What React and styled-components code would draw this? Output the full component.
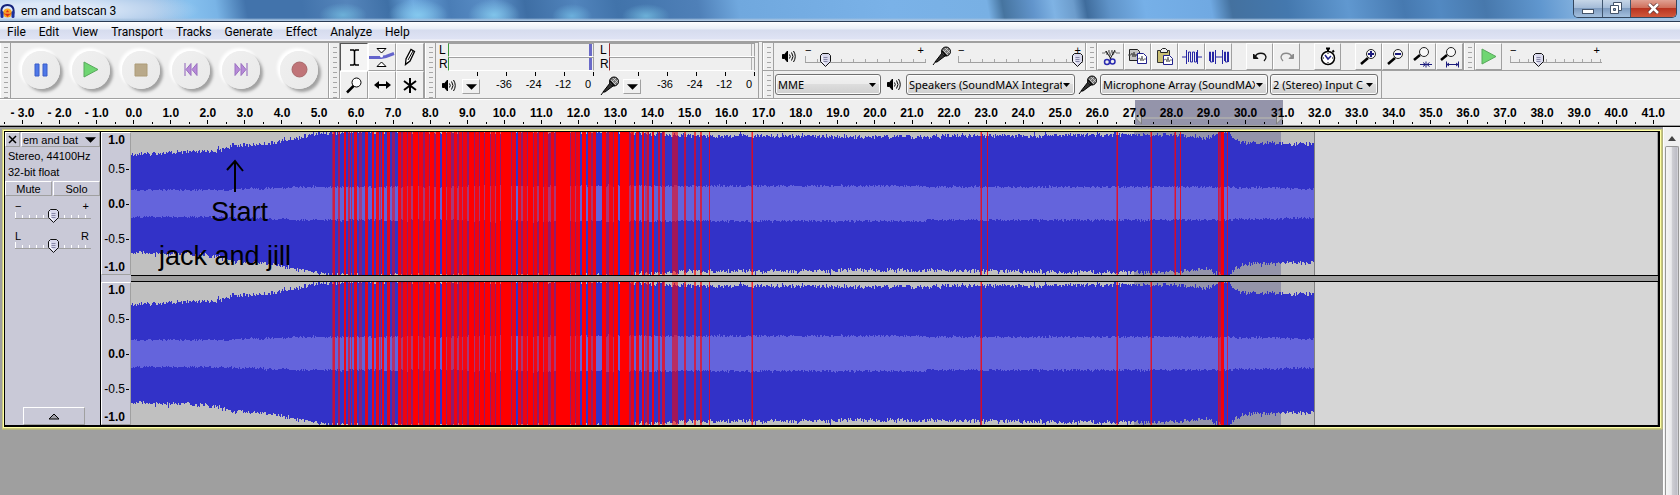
import React from 'react'
import styled, { createGlobalStyle, css } from 'styled-components'

const GlobalStyle = createGlobalStyle`
  * {
    box-sizing: border-box;
  }
  body {
    margin: 0;
    background: #9f9f9f;
    font-family: "Liberation Sans", Arial, sans-serif;
    font-size: 11px;
    color: #000;
  }
  button, select, input {
    font-family: inherit;
    font-size: inherit;
    color: inherit;
    margin: 0;
  }
`

const Window = styled.div`
  min-height: 100vh;
  display: flex;
  flex-direction: column;
  overflow: hidden;
`

/* ---------- title bar and menu ---------- */

const TitleBar = styled.header`
  height: 22px;
  display: flex;
  align-items: flex-start;
  justify-content: space-between;
  border-bottom: 1px solid #2a3c55;
  padding-right: 3px;
  background:
    linear-gradient(180deg, rgba(255, 255, 255, 0) 18px, #a9c4e0 20px),
    radial-gradient(ellipse 150px 22px at 50px 10px, rgba(228, 237, 250, 0.9) 30%, rgba(200, 218, 242, 0) 100%),
    radial-gradient(ellipse 24px 12px at 343px 15px, #6cb0d8, transparent),
    radial-gradient(ellipse 30px 16px at 418px 15px, #84c8ee, transparent),
    radial-gradient(ellipse 26px 16px at 494px 15px, #80c4ea, transparent),
    radial-gradient(ellipse 20px 12px at 572px 16px, #6cb0dc, transparent),
    radial-gradient(ellipse 24px 12px at 646px 16px, #6cb0d8, transparent),
    linear-gradient(80deg, #9dbfe4 0, #9dbfe4 150px, #86c0ee 190px, #79b4e6 215px, #4273ab 245px,
      #4273ab 300px, #5585bb 345px, #3f70a6 385px, #6ba5dc 410px, #4a7db6 445px, #5c90c8 490px, #3e6ea4 520px,
      #5184bc 570px, #4173aa 610px, #4f80b8 690px, #70a8de 730px, #7ab2e8 880px, #78b0e4 975px,
      #46749f 990px, #6295cc 1020px, #7fb3e4 1040px, #6c9ccc 1060px, #3f6c9c 1072px, #5f93c8 1095px,
      #76b0e8 1130px, #70a9e2 1195px, #44719f 1215px, #4478ae 1270px, #6098d0 1330px, #4679b0 1385px,
      #5289c2 1420px, #4778ac 1465px, #6097cf 1520px, #8fbae4 1570px, #a5c8ea 1680px);
`
const Title = styled.h1`
  display: flex;
  align-items: center;
  gap: 6px;
  margin: 0;
  height: 22px;
  font: 12px Roboto, "Open Sans", sans-serif;
`
const WindowButtons = styled.div`
  display: flex;
  height: 18px;
  border: 1px solid #33465e;
  border-top: 0;
  border-radius: 0 0 5px 5px;
  overflow: hidden;
`
const WindowButton = styled.button`
  width: ${props => (props.$close ? 46 : 28)}px;
  padding: 0;
  border: 0;
  border-left: ${props => (props.$first ? '0' : '1px solid #40566f')};
  display: flex;
  align-items: center;
  justify-content: center;
  background: ${props => (props.$close
    ? 'linear-gradient(#e0a193 0, #d0705c 45%, #b93420 50%, #d0583c 100%)'
    : 'linear-gradient(#c6d6e8 0, #a5bcd8 45%, #7f9cc0 50%, #a4c0de 100%)')};
`
const MenuBar = styled.nav`
  height: 20px;
  display: flex;
  align-items: center;
  gap: 13px;
  padding-left: 7px;
  border-bottom: 1px solid #a0a0a0;
  background: linear-gradient(#fff 0, #e9eef7 7px, #d6dcee 8px, #dfe3f4 17px, #f4f4f8 18px);
`
const MenuItem = styled.button`
  padding: 0;
  border: 0;
  background: none;
  font: 12px/18px Roboto, "Open Sans", sans-serif;
`

/* ---------- toolbars ---------- */

const Dock = styled.div`
  height: 57px;
  display: flex;
  background: #efefef;
  border-bottom: 1px solid #a0a0a0;
`
const Rows = styled.div`
  flex: 1;
  display: flex;
  flex-direction: column;
  margin-left: 3px;
  border-left: 1px solid #a0a0a0;
`
const Row = styled.div`
  height: 28px;
  display: flex;
  align-items: stretch;
  border-top: 1px solid #a0a0a0;
`
const Bar = styled.section`
  display: flex;
  border-top: ${props => (props.$tall ? '1px solid #a0a0a0' : '0')};
  border-right: 1px solid #a0a0a0;
`
const Grip = styled.div`
  width: 11px;
  flex: none;
  border-right: 1px solid #a0a0a0;
  box-shadow: inset 1px 0 #fff;
  background: repeating-linear-gradient(#efefef 0, #efefef 4px, #a6a6a6 4px, #a6a6a6 5px) 4px 0 / 4px 100% no-repeat;
`
const TransportButtons = styled.div`
  display: flex;
  align-items: center;
  gap: 12px;
  padding: 0 10px 2px 11px;
`
const RoundButton = styled.button`
  width: 38px;
  height: 38px;
  padding: 0;
  border: 0;
  border-radius: 50%;
  margin-left: ${props => (props.$apart ? 8 : 0)}px;
  display: flex;
  align-items: center;
  justify-content: center;
  background: linear-gradient(135deg, #f0f0f0, #e9e9e9);
  box-shadow: 3px 3px 3px #a2a2a2, -2px -2px 3px 1px #fff, 0 0 0 2px #f3f3f3;
`
const ToolGrid = styled.div`
  display: grid;
  grid-template-columns: repeat(3, 28px);
  grid-template-rows: repeat(2, 28px);
`
const bevel = css`
  border: 1px solid;
  border-color: #fff #a0a0a0 #a0a0a0 #fff;
`
const ToolButton = styled.button`
  ${bevel}
  padding: 0;
  width: ${props => props.$width || 28}px;
  display: flex;
  align-items: center;
  justify-content: center;
  background: #efefef;
  ${props => props.$pressed && css`
    border-color: #555 #fff #fff #555;
    background: #f4f4f4;
  `}
`
const Gap = styled.div`
  width: 14px;
`
const MeterHalf = styled.div`
  display: grid;
  grid-template-columns: 9px 146px;
  grid-template-rows: 14px 14px 5px 19px;
  padding: 0 3px;
`
const MeterName = styled.span`
  font-size: 12px;
  line-height: 14px;
`
const MeterTrack = styled.div`
  border: 1px solid #a0a0a0;
  border-left-color: ${props => props.$color};
  border-bottom-color: #fff;
  background: ${props => (props.$peak
    ? 'linear-gradient(#6a6ac8, #6a6ac8) right 1px top 0 / 3px 100% no-repeat'
    : 'linear-gradient(#b0b0b0, #b0b0b0) right 2px top 0 / 1px 100% no-repeat')};
`
const MeterTicks = styled.div`
  grid-column: 2;
  background: repeating-linear-gradient(90deg, #000 0, #000 1px, transparent 1px, transparent 29px) 29px 1px / 117px 4px no-repeat;
`
const MeterFoot = styled.div`
  grid-column: 1 / 3;
  display: flex;
  align-items: center;
`
const MeterMenu = styled.button`
  ${bevel}
  width: 18px;
  height: 15px;
  padding: 0;
  margin: 2px 0 0 3px;
  background: #efefef;
  display: flex;
  align-items: center;
  justify-content: center;
`
const MeterScale = styled.div`
  flex: 1;
  display: flex;
  justify-content: space-between;
  padding: 0 3px 3px 16px;
`
const IconBox = styled.span`
  width: ${props => props.$width}px;
  flex: none;
  display: flex;
  align-items: center;
  justify-content: center;
`

const thumb = css`
  width: 11px;
  height: 14px;
  border: 0;
  background: url("data:image/svg+xml,%3Csvg xmlns='http://www.w3.org/2000/svg' width='11' height='14'%3E%3Cpath d='M2.5.5h6l2 2v6l-5 5-5-5v-6z' fill='%23d8d8ec' stroke='%23111'/%3E%3Cpath d='M2 3v5l3.500 3.500' fill='none' stroke='%23fff'/%3E%3Cpath d='M3.500 4.500h4M3.500 6.500h4M3.500 8.500h4' stroke='%238888a8'/%3E%3C/svg%3E");
`
const SliderBox = styled.label`
  width: ${props => props.$width}px;
  display: flex;
  flex-direction: column;
  flex: none;
`
const SliderEnds = styled.span`
  display: flex;
  justify-content: space-between;
  height: 12px;
  padding-right: 2px;
  line-height: 14px;
`
const Range = styled.input`
  appearance: none;
  width: 100%;
  height: 14px;
  margin-top: -2px;
  background:
    linear-gradient(#a0a0a0, #a0a0a0) 0 9px / 100% 1px no-repeat,
    linear-gradient(${props => props.$tick}, ${props => props.$tick}) 0 3px / 1px 6px no-repeat,
    repeating-linear-gradient(90deg, ${props => props.$tick} 0, ${props => props.$tick} 1px, transparent 1px, transparent ${props => props.$step}px) 0 6px / 100% 3px no-repeat;
  &::-webkit-slider-thumb {
    appearance: none;
    ${thumb}
  }
`
const SliderPanel = styled.div`
  display: flex;
  align-items: flex-start;
  padding: 0 2px 0 8px;
  & > ${IconBox} {
    height: 26px;
  }
`
const DeviceBar = styled.div`
  display: flex;
  align-items: center;
  padding: 0 3px 0 1px;
  gap: 2px;
`
const DeviceSelect = styled.select`
  appearance: none;
  width: ${props => props.$width}px;
  height: 21px;
  padding: 0 12px 0 2px;
  border: 1px solid #707070;
  border-radius: 3px;
  box-shadow: inset 0 0 0 1px #fcfcfc;
  font: 11px "Noto Sans", "Open Sans", sans-serif;
  background:
    url("data:image/svg+xml,%3Csvg xmlns='http://www.w3.org/2000/svg' width='7' height='4'%3E%3Cpath d='M0 0h7L3.500 4z'/%3E%3C/svg%3E") right 4px center no-repeat,
    linear-gradient(#f2f2f2 0, #ebebeb 50%, #dddddd 50%, #cfcfcf 100%);
`

/* ---------- time ruler ---------- */

const Ruler = styled.div`
  position: relative;
  height: 28px;
  display: flex;
  padding: 0 8px 1px 4px;
  border-top: 1px solid #fff;
  border-bottom: 1px solid #000;
  background: linear-gradient(#efefef 25px, #a0a0a0 25px);
`
const RulerSelection = styled.div`
  position: absolute;
  top: 0;
  bottom: 1px;
  display: flex;
  align-items: flex-end;
  justify-content: space-between;
  background: linear-gradient(#9494aa 17px, #a8a8ac 17px, #a8a8ac 19px, #9494aa 19px);
`
const Second = styled.div`
  position: relative;
  flex: 1 1 0;
  display: flex;
  justify-content: center;
  margin-bottom: 1px;
  font-weight: bold;
  font-size: 12px;
  line-height: 27px;
  white-space: nowrap;
  background:
    linear-gradient(#000, #000) 50% 100% / 1px 4px no-repeat,
    linear-gradient(#000, #000) 0 100% / 1px 2px no-repeat;
`

/* ---------- track ---------- */

const Workspace = styled.main`
  flex: 1;
  display: flex;
  background: #9f9f9f;
`
const TrackList = styled.div`
  flex: 1;
  min-width: 0;
  padding: 2px 1px 0 2px;
`
const TrackFrame = styled.div`
  border: 1px solid #c8c87c;
  padding: 1px;
  background: #ffffa8;
  box-shadow: 0 1px #b4b480, 1px 0 #b4b480;
`
const Track = styled.div`
  display: flex;
  border: 1px solid #000;
  border-right-width: 2px;
  border-bottom-width: 2px;
  background: #c9c9d7;
`
const TrackPanel = styled.aside`
  width: 96px;
  flex: none;
  display: flex;
  flex-direction: column;
  border-right: 1px solid #000;
`
const PanelRow = styled.div`
  display: flex;
  gap: 1px;
`
const PanelButton = styled.button`
  border: 1px solid;
  border-color: #fff #a0a0a0 #a0a0a0 #fff;
  flex: ${props => (props.$width ? 'none' : '1')};
  width: ${props => (props.$width ? props.$width + 'px' : 'auto')};
  height: ${props => props.$height || 15}px;
  padding: 0 ${props => (props.$split ? '3px 0 1px' : 0)};
  display: flex;
  align-items: center;
  justify-content: ${props => (props.$split ? 'space-between' : 'center')};
  background: #c9c9d7;
`
const TrackInfo = styled.p`
  margin: 0;
  padding: 1px 3px;
  line-height: 16px;
`
const PanelSliders = styled.div`
  flex: 1;
  display: flex;
  flex-direction: column;
  gap: 6px;
  padding: 3px 0 0 10px;
`
const CollapseRow = styled.div`
  display: flex;
  justify-content: center;
  padding-left: 3px;
`
const Channels = styled.div`
  position: relative;
  flex: 1;
  min-width: 0;
  display: flex;
  flex-direction: column;
  gap: 7px;
  background: linear-gradient(#000, #000) 30px 143px / 100% 1px no-repeat,
    linear-gradient(#000, #000) 30px 149px / 100% 1px no-repeat,
    linear-gradient(#9f9f9f, #9f9f9f) 30px 143px / 100% 7px no-repeat #c9c9d7;
`
const Channel = styled.div`
  display: flex;
  height: 143px;
`
const AmpRuler = styled.div`
  width: 30px;
  flex: none;
  display: grid;
  grid-template-rows: 29px 35px 35px 28px 14px;
  border: 1px solid #fff;
  border-right-color: #a0a0a0;
  border-bottom-color: #a0a0a0;
  font-size: 12px;
  line-height: 14px;
  text-align: right;
`
const Amp = styled.span`
  height: 14px;
  padding-right: 5px;
  font-weight: ${props => (props.$bold ? 'bold' : 'normal')};
  background: ${props => (props.$tick ? 'linear-gradient(#000, #000) right 1px top 7px / 3px 1px no-repeat' : 'none')};
`
const Wave = styled.svg`
  flex: 1;
  min-width: 0;
  height: 143px;
  display: block;
  background: #d6d6d6;
`
const Note = styled.div`
  position: absolute;
  top: 26px;
  left: 58px;
  width: 132px;
  display: flex;
  flex-direction: column;
  align-items: center;
  font-size: 27px;
  line-height: 44px;
  white-space: nowrap;
`
const NoteTitle = styled.span`
  padding-left: 29px;
  display: flex;
  flex-direction: column;
  align-items: center;
`
const NoteArrow = styled.svg`
  margin: 1px 10px -3px 0;
`
const ScrollBar = styled.div`
  width: 17px;
  flex: none;
  display: flex;
  flex-direction: column;
  border-left: 1px solid #fff;
  background: #f0f0f0;
`
const ScrollArrow = styled.button`
  height: 19px;
  padding: 0;
  border: 0;
  background: #f0f0f0;
`
const ScrollThumb = styled.div`
  flex: 1;
  margin: 0 1px;
  border: 1px solid #979797;
  border-bottom: 0;
  border-radius: 2px 2px 0 0;
  background: linear-gradient(90deg, #f6f6f6 0, #e9e9ec 45%, #cfcfd4 50%, #bdbdc6 90%, #e0e0e4 100%);
`

/* ---------- icons ---------- */

const Logo = () => (
  <svg width="15" height="15" viewBox="0 0 15 15">
    <path d="M2 11C0 4 3 1 7.500 1S15 4 13 11" fill="none" stroke="#14227c" strokeWidth="2" />
    <circle cx="7.500" cy="9" r="4.500" fill="#f9a51a" />
    <path d="M4 10l2-2 1.500-2L9 8l2 2-2 1-1.500 2L6 11z" fill="#e02b14" />
    <path d="M5 9h5" stroke="#ffe84a" />
    <rect x="0.500" y="7" width="3" height="7" rx="1.500" fill="#1b2f9c" />
    <rect x="11.500" y="7" width="3" height="7" rx="1.500" fill="#1b2f9c" />
  </svg>
)

const Speaker = () => (
  <svg width="14" height="13" viewBox="0 0 14 13" fill="none" stroke="#000">
    <path d="M0.500 4.500h2l3-3.500v11l-3-3.500h-2z" fill="#000" />
    <path d="M7.500 4.500q1.500 2 0 4M9.500 2.500q3 4 0 8M11.500 1q3.500 5.500 0 11" />
  </svg>
)

const Mic = () => (
  <svg width="20" height="20" viewBox="0 0 20 20">
    <path d="M1 19l3-4" stroke="#000" />
    <path d="M3 16l7-9 3 3-8 6z" fill="#333" stroke="#000" />
    <circle cx="14" cy="5.500" r="4.500" fill="#777" stroke="#000" />
    <path d="M11 4l5 5M13 2l5 5M11 7l5-5M13 9l5-5" stroke="#ddd" strokeWidth="0.700" />
    <path d="M10 5l4.500 5" stroke="#000" strokeWidth="1.500" />
  </svg>
)

const Down = ({ width = 11 }) => (
  <svg width={width} height="6" viewBox="0 0 12 6"><path d="M0 0h12L6 6z" /></svg>
)

const Magnifier = ({ children }) => (
  <svg width="22" height="20" viewBox="0 0 22 20">
    <path d="M3 17l7-6" stroke="#000" strokeWidth="2.500" />
    <circle cx="13" cy="7" r="4.500" fill="#f8f8f8" stroke="#222" />
    {children}
  </svg>
)

const ZoomIn = () => (
  <Magnifier><path d="M10 7h6M13 4v6" stroke="#1a1a7c" strokeWidth="2" /></Magnifier>
)
const ZoomOut = () => (
  <Magnifier><path d="M10 7h6" stroke="#1a1a7c" strokeWidth="2" /></Magnifier>
)
const FitSelection = () => (
  <svg width="22" height="22" viewBox="0 0 22 22">
    <path d="M2 14l6-5" stroke="#000" strokeWidth="2.500" />
    <circle cx="12" cy="6" r="4.500" fill="#f8f8f8" stroke="#222" />
    <path d="M8 18.500h12M14 15.500v6M11 16.500l2.500 2-2.500 2M17.500 16.500l-2.500 2 2.500 2" stroke="#1a1a7c" fill="none" />
  </svg>
)
const FitProject = () => (
  <svg width="22" height="22" viewBox="0 0 22 22">
    <path d="M2 14l6-5" stroke="#000" strokeWidth="2.500" />
    <circle cx="12" cy="6" r="4.500" fill="#f8f8f8" stroke="#222" />
    <path d="M7 18.500h12M7.500 15.500v6M19.500 15.500v6M10 17l-2 1.500 2 1.500M17 17l2 1.500-2 1.500" stroke="#1a1a7c" fill="none" />
  </svg>
)

const Pause = () => (
  <svg width="14" height="14">
    <path d="M1 1h4v12H1zM9 1h4v12H9z" fill="#4e78e8" stroke="#3a5cc8" />
  </svg>
)
const Play = () => (
  <svg width="16" height="17">
    <path d="M1 1l14 7.500L1 16z" fill="#6fd672" stroke="#58a85c" />
  </svg>
)
const Stop = () => (
  <svg width="14" height="14"><path d="M1 1h12v12H1z" fill="#b9a98a" stroke="#ad9c78" /></svg>
)
const SkipStart = () => (
  <svg width="14" height="15">
    <path d="M1 1v13" stroke="#8c5fb8" />
    <path d="M7 1.500v12L2 7.500zM13 1.500v12L8 7.500z" fill="#b78ad8" stroke="#9a70c0" />
  </svg>
)
const SkipEnd = () => (
  <svg width="14" height="15">
    <path d="M13 1v13" stroke="#8c5fb8" />
    <path d="M1 1.500v12l5-6zM7 1.500v12l5-6z" fill="#b78ad8" stroke="#9a70c0" />
  </svg>
)
const Record = () => (
  <svg width="17" height="17"><circle cx="8.500" cy="8.500" r="7.500" fill="#c07478" stroke="#a8686a" /></svg>
)

const IBeam = () => (
  <svg width="9" height="17" fill="none" stroke="#000">
    <path d="M0 1h3.500L4.500 2l1-1H9M0 16h3.500l1-1 1 1H9" strokeWidth="1.500" />
    <path d="M4.500 1.500v14" strokeWidth="1.500" />
  </svg>
)
const Envelope = () => (
  <svg width="26" height="22">
    <path d="M0 11.500h12l5-1 8-3" fill="none" stroke="#6464cc" strokeWidth="3" />
    <path d="M8 2.500h9L12.500 7zM8 20.500h9L12.500 16z" fill="#fff" stroke="#000" />
    <circle cx="12.500" cy="10" r="1.500" fill="#fff" />
  </svg>
)
const Pencil = () => (
  <svg width="12" height="18" fill="#fff" stroke="#000">
    <path d="M1.500 16.500L2 11l5-9.500 3.500 2L6 13z" strokeWidth="1.300" />
    <path d="M4 12L9 3M1.500 16.500l2-2" />
  </svg>
)
const ZoomTool = () => (
  <svg width="16" height="17">
    <path d="M1 15.500l7-7" stroke="#000" strokeWidth="2.500" />
    <circle cx="10.500" cy="5.500" r="4.500" fill="#fff" stroke="#000" />
  </svg>
)
const TimeShift = () => (
  <svg width="17" height="10">
    <path d="M0 5l5-4v3h7V1l5 4-5 4V6H5v3z" />
  </svg>
)
const MultiTool = () => (
  <svg width="14" height="15" stroke="#000" strokeWidth="2">
    <path d="M7 0v15M1 3l12 9M13 3L1 12" />
  </svg>
)
const Cut = () => (
  <svg width="20" height="18" fill="none">
    <path d="M1 5h3l1-2 1 4 2-5 1 6 2-6 1 5 2-4 1 2h4" stroke="#777" />
    <path d="M5 3l5 8M14 2L9 11" stroke="#111" />
    <circle cx="6" cy="14" r="2.500" stroke="#2a2ab0" strokeWidth="1.500" />
    <circle cx="11.500" cy="13.500" r="2.500" stroke="#2a2ab0" strokeWidth="1.500" />
  </svg>
)
const Copy = () => (
  <svg width="20" height="18" fill="none">
    <path d="M1.500 1.500h8l2 2v9h-10z" fill="#c4c4c4" stroke="#222" />
    <path d="M0 7h3l1-2 1 4 1-5 1 5 1-3 1 2h2" stroke="#555" />
    <path d="M9.500 5.500h6l3 3v7h-9z" fill="#fff" stroke="#20208c" />
    <path d="M10 11l2-1 1 3 1-5 1 5 1-2h2" stroke="#777" />
  </svg>
)
const Paste = () => (
  <svg width="20" height="19" fill="none">
    <path d="M2.500 3.500h12v12h-12z" fill="#c9bf74" stroke="#333" />
    <path d="M5.500 5.500v-2l2-2h3l2 2v2z" fill="#eee" stroke="#222" />
    <path d="M8.500 8.500h6l3 3v6h-9z" fill="#fff" stroke="#20208c" />
    <path d="M9 13l2-1 1 3 1-5 1 5 1-2h2" stroke="#777" />
  </svg>
)
const Trim = () => (
  <svg width="20" height="16" fill="none" stroke="#2626a4">
    <path d="M0 8h5M15 8h5M4.500 1v14M15.500 1v14" />
    <path d="M6.500 13V3h2v10h2V3h2v10h2V3" />
  </svg>
)
const Silence = () => (
  <svg width="20" height="16" fill="none" stroke="#2626a4">
    <path d="M0.500 12V3h1v10h2V3h1v10M15.500 12V3h1v10h2V3h1v10M7 8h6" />
    <path d="M6.500 1v14M13.500 1v14" />
  </svg>
)
const Undo = () => (
  <svg width="14" height="12" fill="none" stroke="#111">
    <path d="M2 6c2-5 10-5 11 0q0 2-2 4" strokeWidth="1.300" />
    <path d="M0.500 3v4.500H5z" fill="#111" />
  </svg>
)
const Redo = () => (
  <svg width="14" height="12" fill="none" stroke="#8a8a8a">
    <path d="M12 6C10 1 2 1 1 6q0 2 2 4" strokeWidth="1.300" />
    <path d="M13.500 3v4.500H9z" fill="#8a8a8a" />
  </svg>
)
const SyncLock = () => (
  <svg width="16" height="19" fill="none" stroke="#000">
    <path d="M6 1.500h4M8 1v3M12.500 3.500l1.500 1.500" strokeWidth="2" />
    <circle cx="8" cy="11" r="6.500" fill="#fff" strokeWidth="1.500" />
    <path d="M5 8l3 4 3-3" stroke="#20208c" strokeWidth="1.500" />
    <path d="M8 6v1M8 15v1M3 11h1M12 11h1" />
  </svg>
)

/* ---------- data ---------- */

const MENUS = ['File', 'Edit', 'View', 'Transport', 'Tracks', 'Generate', 'Effect', 'Analyze', 'Help']
const SECONDS = Array.from({ length: 45 }, (_, i) => i - 3)

// [x, distance of the peak from the edge of the channel]
const PEAKS = [[0, 22], [45, 21], [70, 20], [90, 18], [102, 13], [120, 13], [140, 11], [155, 8], [170, 5], [182, 2],
  [200, 1], [220, 0], [480, 0], [520, 2], [570, 4], [640, 4], [760, 5], [860, 4], [960, 3], [1040, 3], [1064, 4], [1074, 7],
  [1084, 2], [1090, 0], [1098, 0], [1104, 7], [1110, 11], [1184, 12]]
const RMS = [[0, 13], [80, 13], [120, 14], [170, 16], [500, 17], [1090, 16], [1115, 15], [1184, 14]]

// [start, end, opacity] of the clipped stretches
const CLIPS = [
  [201, 202, 0.4], [202, 204, 0.7], [207, 209, 0.6], [213, 215, 0.9], [217, 219, 0.6], [220, 221, 0.6],
  [223, 226, 0.85], [228, 231, 0.4], [234, 237, 0.85], [241, 243, 0.9], [245, 248, 0.85], [249, 250, 0.5],
  [251, 253, 0.9], [256, 259, 0.85], [261, 264, 0.5], [267, 309, 0.45], [311, 385, 0.45], [387, 449, 0.45],
  [451, 455, 0.6], [457, 465, 0.45], [471, 487, 0.45], [489, 500, 0.45],
  [267, 270, 0.85], [272, 276, 0.85], [277, 280, 0.85], [282, 287, 1], [288, 292, 0.85], [294, 298, 0.85],
  [299, 303, 1], [305, 309, 1], [311, 315, 1], [316, 320, 0.85], [323, 326, 0.85], [328, 331, 0.85], [332, 336, 0.85],
  [338, 343, 1], [344, 348, 0.85], [349, 353, 1], [354, 359, 1], [360, 364, 0.85], [365, 369, 1], [370, 380, 1],
  [381, 385, 0.85], [387, 390, 0.85], [392, 396, 0.85], [397, 402, 1], [403, 406, 0.85], [408, 412, 1],
  [413, 417, 0.85], [420, 423, 0.85], [425, 439, 1], [440, 444, 0.85], [445, 449, 0.85], [451, 455, 1],
  [457, 460, 0.85], [462, 465, 0.85], [471, 475, 1], [478, 482, 0.85], [483, 487, 1], [489, 498, 1],
  [500, 503, 0.85], [505, 508, 0.85], [511, 513, 0.9], [514, 516, 0.4], [516, 518, 0.7], [521, 523, 0.9],
  [527, 529, 0.65], [531, 534, 0.7], [541, 547, 0.55], [553, 555, 0.65], [563, 565, 0.65], [569, 571, 0.65],
  [578, 579, 0.75], [620, 621, 0.4], [621, 622, 0.8], [849, 850, 0.4], [850, 851, 0.8],
  [985, 986, 0.4], [986, 987, 0.8], [1019, 1020, 0.4], [1020, 1021, 0.8],
  [1087, 1088, 0.7], [1088, 1090, 0.5], [1090, 1093, 0.95], [1096, 1097, 0.7],
]
const FIRST_CHANNEL_CLIPS = [[856, 857, 0.8], [1043, 1044, 0.4], [1044, 1045, 0.8], [1049, 1050, 0.8]]

const noise = n => {
  const v = Math.sin(n * 12.9898) * 43758.5453
  return v - Math.floor(v)
}

const valueAt = (points, x) => {
  const i = points.findIndex(p => p[0] > x)
  const [x0, y0] = points[i - 1]
  const [x1, y1] = points[i]
  return y0 + ((y1 - y0) * (x - x0)) / (x1 - x0)
}

// one step per pixel column, out along the top and back along the bottom
const wavePath = (edge, roughness, seed) => {
  let top = ''
  let bottom = ''
  for (let x = 0; x < 1183; x++) {
    const spike = n => Math.round((noise(n) - 0.5) * roughness + (noise(n + 7000) > 0.93 ? -roughness / 2 : 0))
    const up = Math.max(0, Math.round(edge(x)) + spike(x + seed))
    const down = Math.min(143, 143 - Math.round(edge(x)) - spike(x + seed + 3000))
    top += `V${up}h1`
    bottom = `V${down}h-1` + bottom
  }
  return `M0 71${top}${bottom}z`
}

const PEAK_PATH = wavePath(x => valueAt(PEAKS, x), 4, 11)
const RMS_PATH = wavePath(x => 71 - valueAt(RMS, x), 2, 500)

/* ---------- parts ---------- */

const Slider = ({ label, width, value, step, tick = '#a8a8a8', ends = ['−', '+'] }) => (
  <SliderBox $width={width}>
    <SliderEnds><span>{ends[0]}</span><span>{ends[1]}</span></SliderEnds>
    <Range type="range" aria-label={label} min="0" max="100" defaultValue={value} $step={step} $tick={tick} />
  </SliderBox>
)

const Meter = ({ label, color, peak, icon }) => (
  <MeterHalf>
    <MeterName>L</MeterName>
    <MeterTrack $color={color} $peak={peak} />
    <MeterName>R</MeterName>
    <MeterTrack $color={color} $peak={peak} />
    <MeterTicks />
    <MeterFoot>
      <IconBox $width={20}>{icon}</IconBox>
      <MeterMenu aria-label={label}><Down /></MeterMenu>
      <MeterScale>
        <span>-36</span><span>-24</span><span>-12</span><span>0</span>
      </MeterScale>
    </MeterFoot>
  </MeterHalf>
)

const Device = ({ label, width, value }) => (
  <DeviceSelect aria-label={label} $width={width} defaultValue={value}>
    <option>{value}</option>
  </DeviceSelect>
)

const WaveChannel = ({ clips }) => (
  <Channel>
    <AmpRuler>
      <Amp $bold>1.0</Amp>
      <Amp $tick>0.5</Amp>
      <Amp $bold $tick>0.0</Amp>
      <Amp $tick>-0.5</Amp>
      <Amp $bold>-1.0</Amp>
    </AmpRuler>
    <Wave viewBox="0 0 1527 143" preserveAspectRatio="none" shapeRendering="crispEdges">
      <rect width="1183" height="143" fill="#c0c0c0" />
      <rect x="1003" width="147" height="143" fill="#9494aa" />
      <path d={PEAK_PATH} fill="#3232c8" />
      <path d={RMS_PATH} fill="#6464dc" />
      {clips.map(([from, to, opacity], i) => (
        <rect key={i} x={from} width={to - from} height="143" fill="#f00" opacity={opacity} />
      ))}
      <rect x="1183" width="1" height="143" fill="#808080" />
      <rect x="1526" width="1" height="143" fill="#9f9f9f" />
    </Wave>
  </Channel>
)

const EDIT_TOOLS = [
  ['Cut', Cut], ['Copy', Copy], ['Paste', Paste], ['Trim', Trim], ['Silence', Silence], null,
  ['Undo', Undo], ['Redo', Redo], null,
  ['Sync-Lock', SyncLock], null,
  ['Zoom In', ZoomIn], ['Zoom Out', ZoomOut], ['Fit Selection', FitSelection], ['Fit Project', FitProject],
]

export default function App() {
  // the ruler runs from -3.5 s to 41.5 s between its paddings
  const rulerX = s => `calc(4px + (100% - 12px) * ${(s + 3.5) / 45})`

  return (
    <Window>
      <GlobalStyle />
      <TitleBar>
        <Title><Logo />em and batscan 3</Title>
        <WindowButtons>
          <WindowButton $first aria-label="Minimize">
            <svg width="13" height="12"><rect x="0.500" y="6.500" width="11" height="4" fill="#fff" stroke="#44546a" /></svg>
          </WindowButton>
          <WindowButton aria-label="Restore">
            <svg width="13" height="13" fill="#fff" stroke="#44546a">
              <path d="M3.500 0.500h8v8h-8z" />
              <path d="M0.500 3.500h8v8h-8z" />
              <path d="M3.500 6.500h2v2h-2z" fill="#8fa8c8" />
            </svg>
          </WindowButton>
          <WindowButton $close aria-label="Close">
            <svg width="13" height="11">
              <path d="M2 1l9 9M11 1L2 10" stroke="#5c3030" strokeWidth="4" />
              <path d="M2 1l9 9M11 1L2 10" stroke="#fff" strokeWidth="2.500" />
            </svg>
          </WindowButton>
        </WindowButtons>
      </TitleBar>

      <MenuBar>
        {MENUS.map(name => <MenuItem key={name}>{name}</MenuItem>)}
      </MenuBar>

      <Dock>
        <Bar $tall>
          <Grip />
          <TransportButtons>
            <RoundButton aria-label="Pause"><Pause /></RoundButton>
            <RoundButton aria-label="Play"><Play /></RoundButton>
            <RoundButton aria-label="Stop"><Stop /></RoundButton>
            <RoundButton aria-label="Skip to Start"><SkipStart /></RoundButton>
            <RoundButton aria-label="Skip to End"><SkipEnd /></RoundButton>
            <RoundButton aria-label="Record" $apart><Record /></RoundButton>
          </TransportButtons>
        </Bar>
        <Bar $tall>
          <Grip />
          <ToolGrid>
            <ToolButton $pressed aria-label="Selection Tool"><IBeam /></ToolButton>
            <ToolButton aria-label="Envelope Tool"><Envelope /></ToolButton>
            <ToolButton aria-label="Draw Tool"><Pencil /></ToolButton>
            <ToolButton aria-label="Zoom Tool"><ZoomTool /></ToolButton>
            <ToolButton aria-label="Time Shift Tool"><TimeShift /></ToolButton>
            <ToolButton aria-label="Multi-Tool"><MultiTool /></ToolButton>
          </ToolGrid>
        </Bar>
        <Bar $tall>
          <Grip />
          <Meter label="Playback meter" color="#3c9a3c" peak icon={<Speaker />} />
          <Meter label="Recording meter" color="#a03030" icon={<Mic />} />
        </Bar>
        <Rows>
          <Row>
            <Bar>
              <Grip />
              <SliderPanel>
                <IconBox $width={14}><Speaker /></IconBox>
                <IconBox $width={9} />
                <Slider label="Playback Volume" width={121} value={14} step={12} />
                <IconBox $width={32}><Mic /></IconBox>
                <Slider label="Recording Volume" width={125} value={100} step={12} />
              </SliderPanel>
            </Bar>
            <Bar>
              <Grip />
              {EDIT_TOOLS.map((tool, i) => {
                if (!tool) return <Gap key={i} />
                const [name, Icon] = tool
                return <ToolButton key={i} $width={27} aria-label={name}><Icon /></ToolButton>
              })}
            </Bar>
            <Grip />
            <ToolButton $width={27} aria-label="Play at Speed"><Play /></ToolButton>
            <SliderPanel>
              <Slider label="Playback Speed" width={92} value={29} step={9} />
            </SliderPanel>
          </Row>
          <Row>
            <Bar>
              <Grip />
              <DeviceBar>
                <Device label="Audio Host" width={106} value="MME" />
                <IconBox $width={21}><Speaker /></IconBox>
                <Device label="Output Device" width={169} value="Speakers (SoundMAX Integrat" />
                <IconBox $width={21}><Mic /></IconBox>
                <Device label="Input Device" width={168} value="Microphone Array (SoundMAX" />
                <Device label="Input Channels" width={108} value="2 (Stereo) Input C" />
              </DeviceBar>
            </Bar>
          </Row>
        </Rows>
      </Dock>

      <Ruler>
        <RulerSelection style={{ left: rulerX(27), right: `calc(100% - ${rulerX(31).replace('calc', '')})` }}>
          <svg width="7" height="13"><path d="M6.500 0v12L0.500 6z" fill="#c0c0c0" stroke="#808080" /></svg>
          <svg width="7" height="13"><path d="M0.500 0v12l6-6z" fill="#c0c0c0" stroke="#808080" /></svg>
        </RulerSelection>
        {SECONDS.map(s => (
          <Second key={s}>{s < 0 ? `- ${-s}.0` : `${s}.0`}</Second>
        ))}
      </Ruler>

      <Workspace>
        <TrackList>
          <TrackFrame>
            <Track>
              <TrackPanel>
                <PanelRow>
                  <PanelButton $width={15} aria-label="Close track">
                    <svg width="9" height="9"><path d="M1 1l7 7M8 1L1 8" stroke="#000" strokeWidth="1.500" /></svg>
                  </PanelButton>
                  <PanelButton $split>em and bat<Down /></PanelButton>
                </PanelRow>
                <TrackInfo>Stereo, 44100Hz<br />32-bit float</TrackInfo>
                <PanelRow>
                  <PanelButton>Mute</PanelButton>
                  <PanelButton>Solo</PanelButton>
                </PanelRow>
                <PanelSliders>
                  <Slider label="Gain" width={76} value={50} step={7} tick="#fff" />
                  <Slider label="Pan" width={76} value={50} step={7} tick="#fff" ends={['L', 'R']} />
                </PanelSliders>
                <CollapseRow>
                  <PanelButton $width={62} $height={18} aria-label="Collapse track">
                    <svg width="12" height="7"><path d="M1 6L6 1l5 5z" fill="#a0a0a8" stroke="#000" /></svg>
                  </PanelButton>
                </CollapseRow>
              </TrackPanel>
              <Channels>
                <WaveChannel clips={[...CLIPS, ...FIRST_CHANNEL_CLIPS]} />
                <WaveChannel clips={CLIPS} />
                <Note>
                  <NoteTitle>
                    <NoteArrow width="20" height="34" fill="none" stroke="#000" strokeWidth="2">
                      <path d="M10 33V2M2 11l8-9 8 10" />
                    </NoteArrow>
                    Start
                  </NoteTitle>
                  <span>jack and jill</span>
                </Note>
              </Channels>
            </Track>
          </TrackFrame>
        </TrackList>
        <ScrollBar>
          <ScrollArrow aria-label="Scroll up">
            <svg width="8" height="5"><path d="M4 0l4 5H0z" fill="#444" /></svg>
          </ScrollArrow>
          <ScrollThumb />
        </ScrollBar>
      </Workspace>
    </Window>
  )
}
